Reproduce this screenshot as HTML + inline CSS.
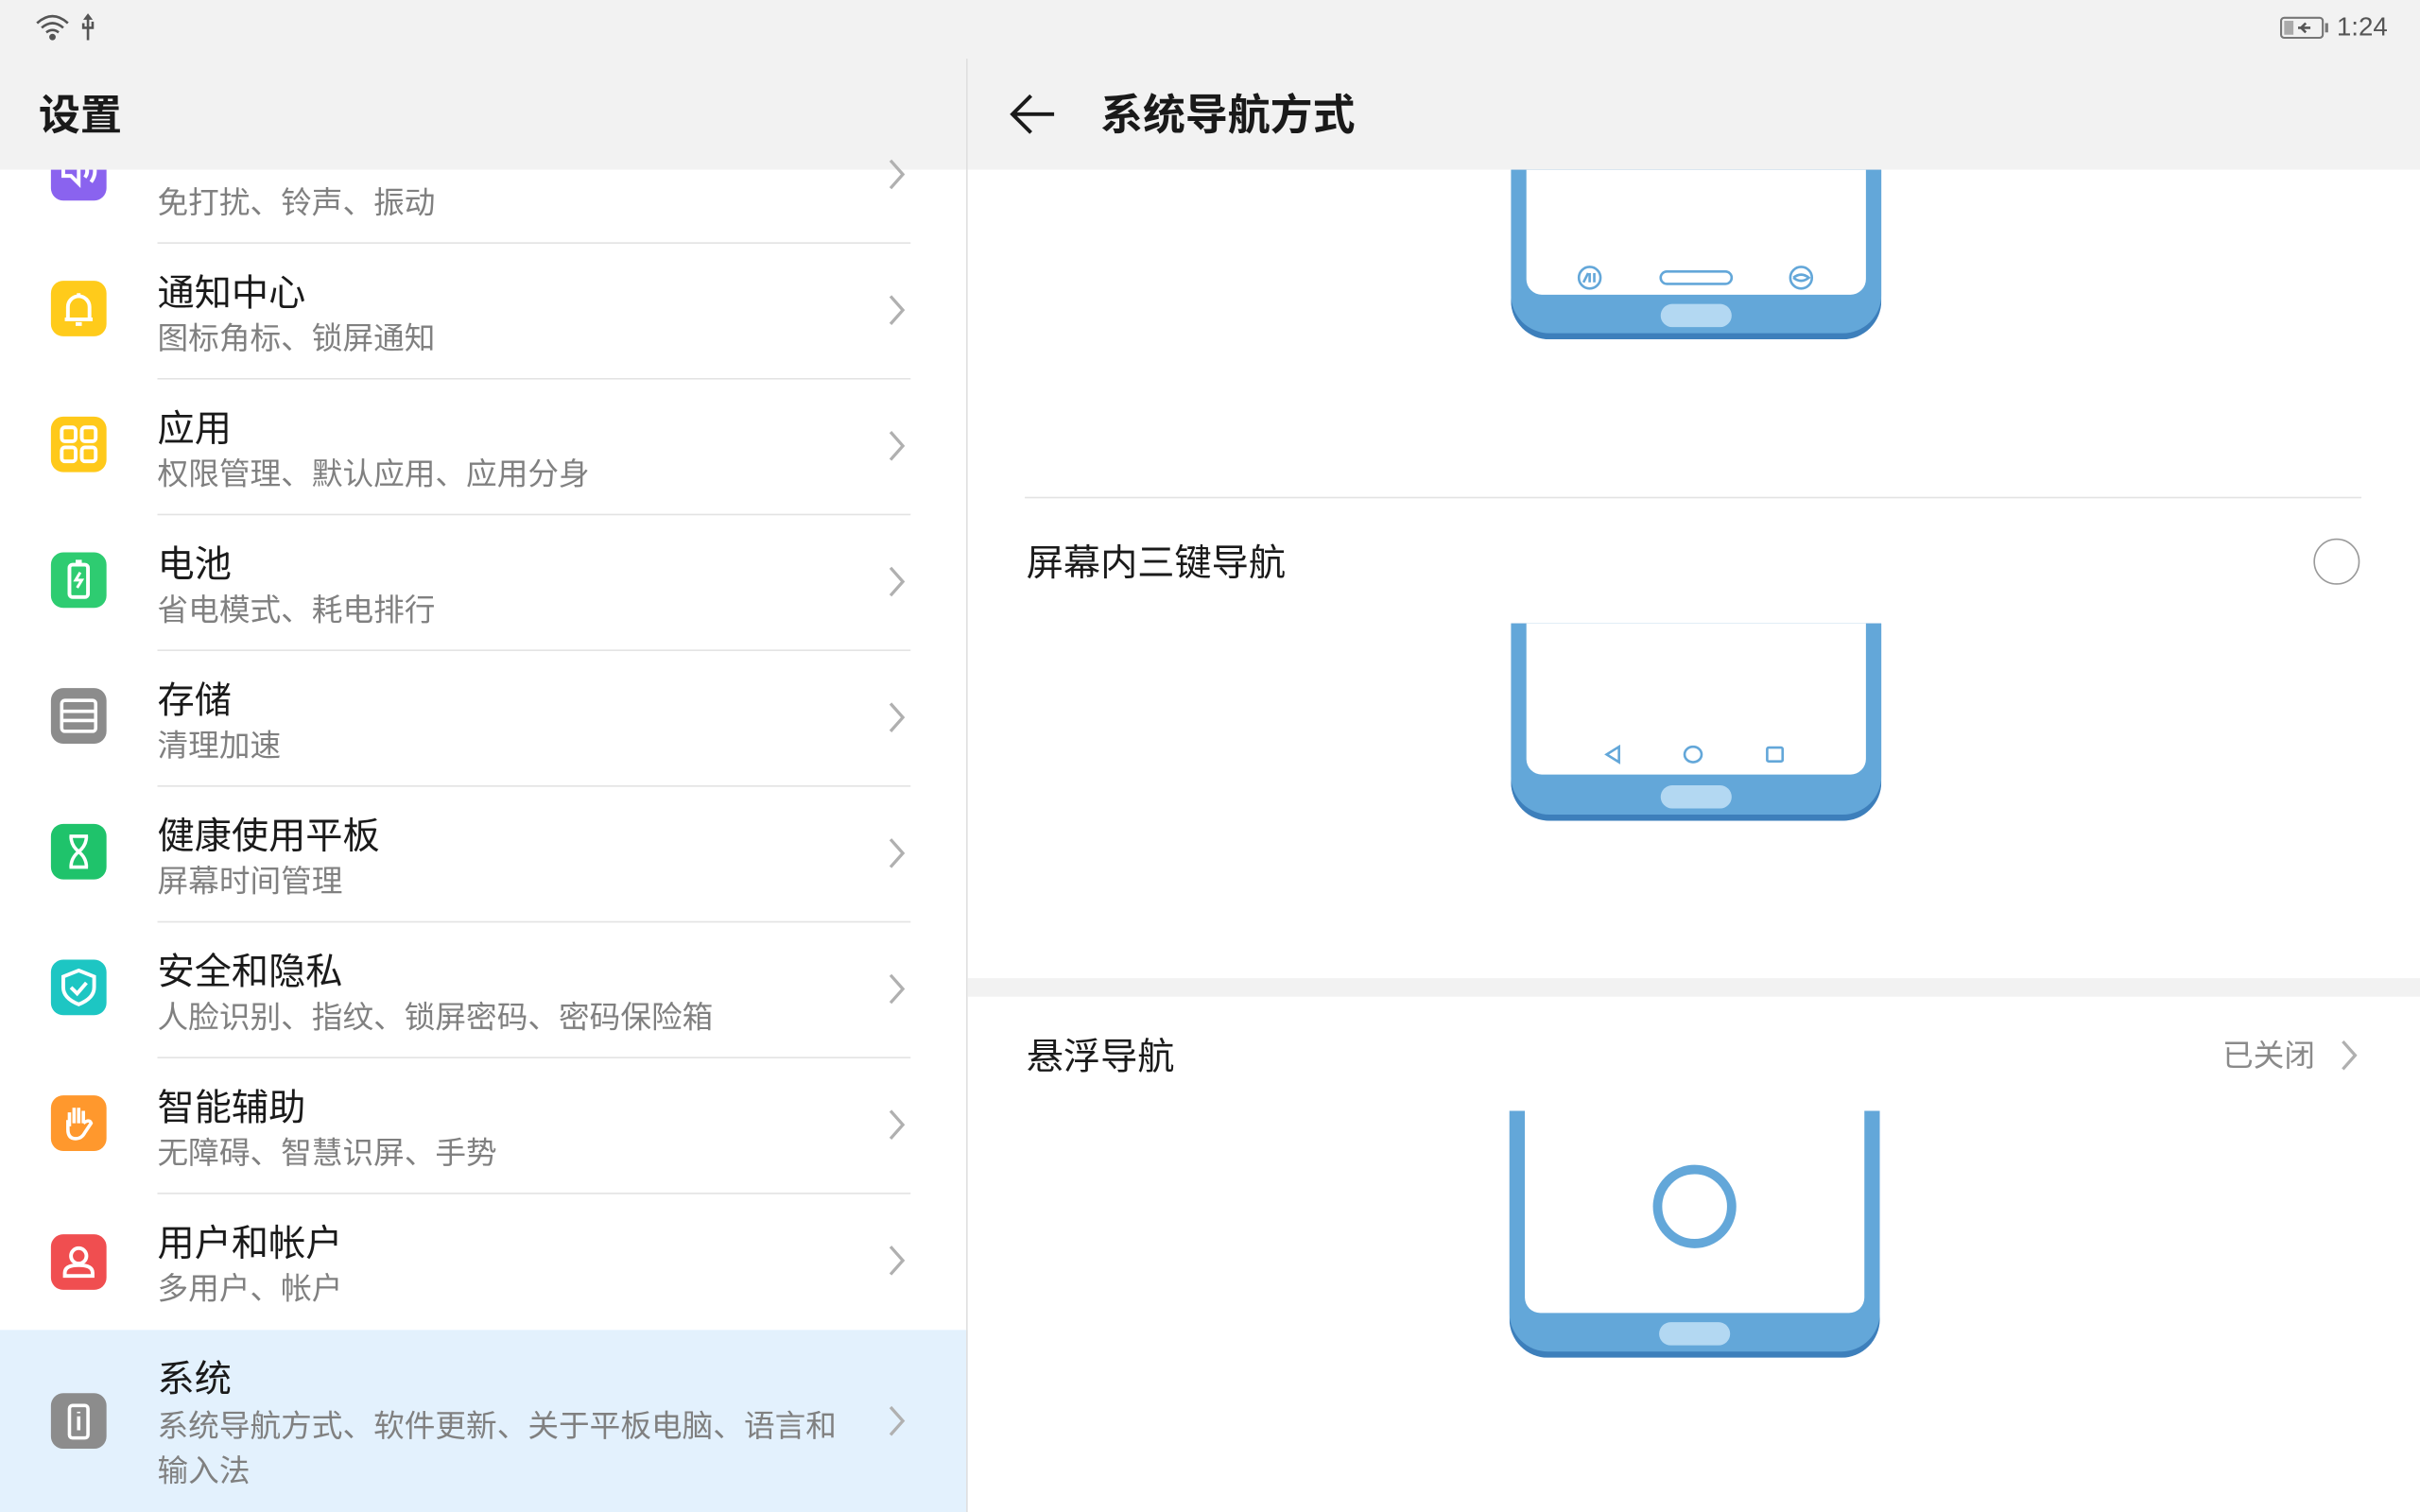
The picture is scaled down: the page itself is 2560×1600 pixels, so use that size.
<!DOCTYPE html>
<html><head><meta charset="utf-8"><style>
*{margin:0;padding:0;box-sizing:border-box}
html,body{width:2560px;height:1600px;overflow:hidden;background:#fff}
#w{position:absolute;left:0;top:0;width:1568px;height:980px;transform:scale(1.632653);transform-origin:0 0;font-family:"Liberation Sans","Noto Sans CJK SC",sans-serif;background:#fff}
.a{position:absolute}
.hdr{top:0;height:110px;background:#f2f2f2}
.t{position:absolute;left:102px;font-size:24px;line-height:30px;color:#1a1a1a;white-space:nowrap;margin-top:2px}
.s{position:absolute;left:102px;font-size:20px;line-height:26px;color:#808080;white-space:nowrap;margin-top:2px}
.ic{position:absolute;left:33px;width:36px;height:36px;border-radius:8px}
.sep{position:absolute;left:102px;width:488px;height:1px;background:#e3e3e3}
</style></head><body><div id="w">

<div class="ic" style="top:94px;background:#8a63ef"></div>
<svg class="a" style="left:33px;top:94px" width="36" height="36" viewBox="0 0 36 36" fill="none" stroke="#fff" stroke-width="2.4"><path d="M8 14h5l5-5v16l-5-5H8z"/><path d="M22 13q3 4 0 8M26 10q5 7 0 14"/></svg>
<div class="hdr a" style="left:0;width:627px"></div>
<div class="s" style="top:117px">免打扰、铃声、振动</div>
<div class="sep" style="top:157px"></div>

<div class="ic" style="top:182px;background:#ffcb1b"></div>
<svg class="a" style="left:33px;top:182px" width="36" height="36" viewBox="0 0 36 36" fill="none" stroke="#fff" stroke-width="2.4"><path d="M11 25V17a7 7 0 0 1 14 0v8zM9 25h18M18 10V8M16 28h4"/></svg>
<div class="t" style="top:174px">通知中心</div><div class="s" style="top:205px">图标角标、锁屏通知</div>
<div class="sep" style="top:245px"></div>

<div class="ic" style="top:270px;background:#ffc91a"></div>
<svg class="a" style="left:33px;top:270px" width="36" height="36" viewBox="0 0 36 36" fill="none" stroke="#fff" stroke-width="2.4"><rect x="7" y="7" width="9" height="9" rx="2"/><rect x="20" y="7" width="9" height="9" rx="2"/><rect x="7" y="20" width="9" height="9" rx="2"/><rect x="20" y="20" width="9" height="9" rx="2"/></svg>
<div class="t" style="top:262px">应用</div><div class="s" style="top:293px">权限管理、默认应用、应用分身</div>
<div class="sep" style="top:333px"></div>

<div class="ic" style="top:358px;background:#2ecc71"></div>
<svg class="a" style="left:33px;top:358px" width="36" height="36" viewBox="0 0 36 36" fill="none" stroke="#fff" stroke-width="2.4"><rect x="12" y="8" width="12" height="21" rx="2"/><path d="M16 6h4"/><path d="M19 13l-3 5h4l-3 5" stroke-width="1.8"/></svg>
<div class="t" style="top:350px">电池</div><div class="s" style="top:381px">省电模式、耗电排行</div>
<div class="sep" style="top:421px"></div>

<div class="ic" style="top:446px;background:#8c8c8c"></div>
<svg class="a" style="left:33px;top:446px" width="36" height="36" viewBox="0 0 36 36" fill="none" stroke="#fff" stroke-width="2.2"><rect x="7" y="8" width="22" height="20" rx="2"/><path d="M7 15h22M7 21h22"/></svg>
<div class="t" style="top:438px">存储</div><div class="s" style="top:469px">清理加速</div>
<div class="sep" style="top:509px"></div>

<div class="ic" style="top:534px;background:#1fc36b"></div>
<svg class="a" style="left:33px;top:534px" width="36" height="36" viewBox="0 0 36 36" fill="none" stroke="#fff" stroke-width="2.2"><path d="M12 8h12M12 28h12M13 8q0 6 5 10q5-4 5-10M13 28q0-6 5-10q5 4 5 10"/></svg>
<div class="t" style="top:526px">健康使用平板</div><div class="s" style="top:557px">屏幕时间管理</div>
<div class="sep" style="top:597px"></div>

<div class="ic" style="top:622px;background:#1dc6c3"></div>
<svg class="a" style="left:33px;top:622px" width="36" height="36" viewBox="0 0 36 36" fill="none" stroke="#fff" stroke-width="2.4"><path d="M18 7l10 4v7q0 7-10 11q-10-4-10-11v-7z"/><path d="M13 18l4 4 6-7"/></svg>
<div class="t" style="top:614px">安全和隐私</div><div class="s" style="top:645px">人脸识别、指纹、锁屏密码、密码保险箱</div>
<div class="sep" style="top:685px"></div>

<div class="ic" style="top:710px;background:#ff982d"></div>
<svg class="a" style="left:33px;top:710px" width="36" height="36" viewBox="0 0 36 36" fill="none" stroke="#fff" stroke-width="2.2"><path d="M12 20V11M15 18V8M18 18V8M21 18V10M21 18q4-3 5 0l-4 6q-2 4-6 4q-5 0-5-6v-6"/></svg>
<div class="t" style="top:702px">智能辅助</div><div class="s" style="top:733px">无障碍、智慧识屏、手势</div>
<div class="sep" style="top:773px"></div>

<div class="ic" style="top:800px;background:#f04e50"></div>
<svg class="a" style="left:33px;top:800px" width="36" height="36" viewBox="0 0 36 36" fill="none" stroke="#fff" stroke-width="2.4"><circle cx="18" cy="14" r="5"/><path d="M9 27v-2q0-5 9-5q9 0 9 5v2z"/></svg>
<div class="t" style="top:790px">用户和帐户</div><div class="s" style="top:821px">多用户、帐户</div>

<div class="a" style="left:0;top:862px;width:627px;height:118px;background:#e3f1fd"></div>
<div class="ic" style="top:903px;background:#8c8c8c"></div>
<svg class="a" style="left:33px;top:903px" width="36" height="36" viewBox="0 0 36 36" fill="none" stroke="#fff" stroke-width="2.2"><rect x="12" y="8" width="12" height="21" rx="2"/><path d="M18 15v9M18 12v1"/></svg>
<div class="t" style="top:878px">系统</div>
<div class="s" style="top:910px">系统导航方式、软件更新、关于平板电脑、语言和</div>
<div class="s" style="top:939px">输入法</div>

<svg class="a" style="left:572px;top:100px" width="18" height="840" viewBox="0 0 18 840" fill="none" stroke="#b0b0b0" stroke-width="2">
<path d="M5 4l8 9-8 9"/><path d="M5 92l8 9-8 9"/><path d="M5 180l8 9-8 9"/><path d="M5 268l8 9-8 9"/><path d="M5 356l8 9-8 9"/><path d="M5 444l8 9-8 9"/><path d="M5 532l8 9-8 9"/><path d="M5 620l8 9-8 9"/><path d="M5 708l8 9-8 9"/><path d="M5 812l8 9-8 9"/></svg>

<div class="a" style="left:0;top:0;width:1568px;height:38px;background:#f2f2f2"></div>
<div class="a" style="left:25px;top:58px;font-size:27px;line-height:34px;font-weight:bold;color:#1a1a1a">设置</div>
<svg class="a" style="left:22px;top:8px" width="46" height="20" viewBox="0 0 46 20" fill="none" stroke="#555" stroke-width="1.6"><path d="M2 7q10-9 20 0M5 10q7-6 14 0M8 13q4-3 8 0"/><circle cx="12" cy="16" r="1.3" fill="#555"/><path d="M35 2v16M32 7v3h6V6M35 2l-1.5 2h3z"/></svg>
<div class="a" style="left:627px;top:38px;width:941px;height:72px;background:#f2f2f2"></div>
<div class="a" style="left:626px;top:38px;width:1px;height:942px;background:#e0e0e0"></div>
<svg class="a" style="left:652px;top:60px" width="34" height="28" viewBox="0 0 34 28" fill="none" stroke="#1a1a1a" stroke-width="2.4"><path d="M16 2L4 14l12 12M4 14h27"/></svg>
<div class="a" style="left:713px;top:58px;font-size:27.5px;line-height:34px;font-weight:bold;color:#1a1a1a">系统导航方式</div>
<svg class="a" style="left:1477px;top:10px" width="34" height="16" viewBox="0 0 34 16"><rect x="1" y="1.5" width="27" height="13" rx="2" fill="none" stroke="#777" stroke-width="1.3"/><rect x="3" y="3.5" width="6" height="9" fill="#aaa"/><rect x="29.5" y="5" width="2" height="6" fill="#777"/><path d="M12 8h8M17 5l-3 3 3 3" stroke="#555" stroke-width="1.6" fill="none"/></svg>
<div class="a" style="left:1514px;top:8px;font-size:17px;color:#555">1:24</div>

<svg class="a" style="left:979px;top:110px" width="240" height="110" viewBox="0 0 240 110">
<path d="M0 0H240V85A25 25 0 0 1 215 110H25A25 25 0 0 1 0 85Z" fill="#3d7fbb"/>
<path d="M0 0H240V81A25 25 0 0 1 215 106H25A25 25 0 0 1 0 81Z" fill="#63a7d9"/>
<path d="M10 0H230V71A10 10 0 0 1 220 81H20A10 10 0 0 1 10 71Z" fill="#fff"/>
<rect x="97" y="87" width="46" height="15" rx="7.5" fill="#b3d8f2"/>
<g fill="none" stroke="#63a7d9" stroke-width="1.6"><circle cx="51" cy="70" r="7"/><path d="M47 73l3-6M51 73v-6M54 73v-6"/><rect x="97" y="66" width="46" height="8" rx="4"/><circle cx="188" cy="70" r="7"/><path d="M183 70q5-4 10 0q-5 4-10 0"/></g>
</svg>
<div class="a" style="left:664px;top:322px;width:866px;height:1px;background:#e3e3e3"></div>
<div class="a" style="left:665px;top:351px;font-size:24px;line-height:30px;color:#1a1a1a">屏幕内三键导航</div>
<div class="a" style="left:1499px;top:349px;width:30px;height:30px;border-radius:50%;border:1.5px solid #9a9a9a"></div>

<svg class="a" style="left:979px;top:404px" width="240" height="128" viewBox="0 0 240 128">
<path d="M0 0H240V103A25 25 0 0 1 215 128H25A25 25 0 0 1 0 103Z" fill="#3d7fbb"/>
<path d="M0 0H240V99A25 25 0 0 1 215 124H25A25 25 0 0 1 0 99Z" fill="#63a7d9"/>
<path d="M10 0H230V88A10 10 0 0 1 220 98H20A10 10 0 0 1 10 88Z" fill="#fff"/>
<rect x="97" y="105" width="46" height="15" rx="7.5" fill="#b3d8f2"/>
<g fill="none" stroke="#63a7d9" stroke-width="1.6"><path d="M70 80l-8 5 8 5z"/><ellipse cx="118" cy="85" rx="5.5" ry="5"/><rect x="166" y="80.5" width="10" height="9" rx="1"/></g>
</svg>

<div class="a" style="left:627px;top:634px;width:941px;height:12px;background:#f2f2f2"></div>
<div class="a" style="left:665px;top:671px;font-size:24px;line-height:30px;color:#1a1a1a">悬浮导航</div>
<div class="a" style="left:1440px;top:672px;font-size:20px;line-height:26px;color:#8a8a8a">已关闭</div>
<svg class="a" style="left:1514px;top:672px" width="14" height="24" viewBox="0 0 14 24" fill="none" stroke="#b0b0b0" stroke-width="2"><path d="M4 3l8 9-8 9"/></svg>

<svg class="a" style="left:978px;top:720px" width="240" height="160" viewBox="0 0 240 160">
<path d="M0 0H240V135A25 25 0 0 1 215 160H25A25 25 0 0 1 0 135Z" fill="#3d7fbb"/>
<path d="M0 0H240V131A25 25 0 0 1 215 156H25A25 25 0 0 1 0 131Z" fill="#63a7d9"/>
<path d="M10 0H230V121A10 10 0 0 1 220 131H20A10 10 0 0 1 10 121Z" fill="#fff"/>
<rect x="97" y="137" width="46" height="15" rx="7.5" fill="#b3d8f2"/>
<circle cx="120" cy="62" r="24" fill="none" stroke="#63a7d9" stroke-width="6"/>
</svg>

</div></body></html>
